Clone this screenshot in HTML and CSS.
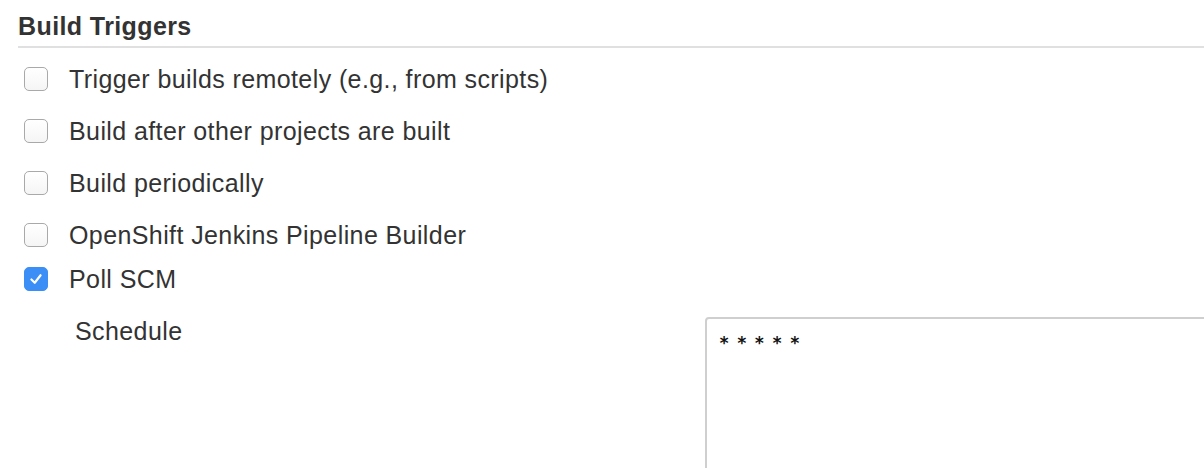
FILE: index.html
```html
<!DOCTYPE html>
<html>
<head>
<meta charset="utf-8">
<link rel="stylesheet" href="styles.css">
</head>
<body>
<div class="section">
  <div class="section-header">Build Triggers</div>
  <div class="options">
    <label class="option"><span class="cb"></span><span class="option-text">Trigger builds remotely (e.g., from scripts)</span></label>
    <label class="option"><span class="cb"></span><span class="option-text">Build after other projects are built</span></label>
    <label class="option"><span class="cb"></span><span class="option-text">Build periodically</span></label>
    <label class="option"><span class="cb"></span><span class="option-text">OpenShift Jenkins Pipeline Builder</span></label>
    <label class="option option-last"><span class="cb cb-checked"><svg viewBox="0 0 24 24" width="20" height="20"><path d="M6.5 12.5 L10.5 16.5 L17.5 7.5" fill="none" stroke="#fff" stroke-width="2.6" stroke-linecap="round" stroke-linejoin="round"/></svg></span><span class="option-text">Poll SCM</span></label>
  </div>
  <div class="nested">
    <div class="field-label">Schedule</div>
    <div class="field-input"><div class="textarea">* * * * *</div></div>
  </div>
</div>
</body>
</html>
```
FILE: styles.css
```css
html, body {
  margin: 0;
  padding: 0;
  background: #fff;
  overflow: hidden;
}
body {
  width: 1204px;
  height: 468px;
  font-family: "Liberation Sans", Arial, Helvetica, sans-serif;
  color: #333;
}
.section {
  padding-left: 18px;
}
.section-header {
  font-size: 25px;
  font-weight: bold;
  letter-spacing: 0.4px;
  line-height: 28px;
  padding-top: 12px;
  padding-bottom: 6px;
  border-bottom: 2px solid #e0e0e0;
  color: #333;
}
.options {
  display: flex;
  flex-direction: column;
  padding-left: 6px;
  padding-top: 5px;
}
.option {
  display: flex;
  align-items: center;
  height: 52px;
}
.option-last {
  height: 36px;
}
.cb {
  width: 22px;
  height: 22px;
  border: 1px solid #a9a9a9;
  border-radius: 5px;
  background: linear-gradient(#fff, #f5f5f5);
  box-sizing: content-box;
  flex: none;
  display: flex;
  align-items: center;
  justify-content: center;
}
.cb-checked {
  background: #3b8ef6;
  border-color: #3b8ef6;
}
.option-text {
  margin-left: 21px;
  font-size: 25px;
  letter-spacing: 0.4px;
  color: #333;
}
.nested {
  display: flex;
  padding-left: 57px;
  margin-top: 20px;
}
.field-label {
  width: 630px;
  font-size: 25px;
  letter-spacing: 0.4px;
  line-height: 28px;
  flex: none;
}
.field-input {
  flex: 1;
}
.textarea {
  width: 600px;
  height: 200px;
  border: 2px solid #cfcfcf;
  border-radius: 4px;
  box-sizing: border-box;
  padding: 14px 12px;
  font-family: "DejaVu Sans Mono", "Liberation Mono", monospace;
  font-size: 17px;
  letter-spacing: -1.4px;
  line-height: 20px;
  font-weight: bold;
  color: #111;
  white-space: pre;
}
```
